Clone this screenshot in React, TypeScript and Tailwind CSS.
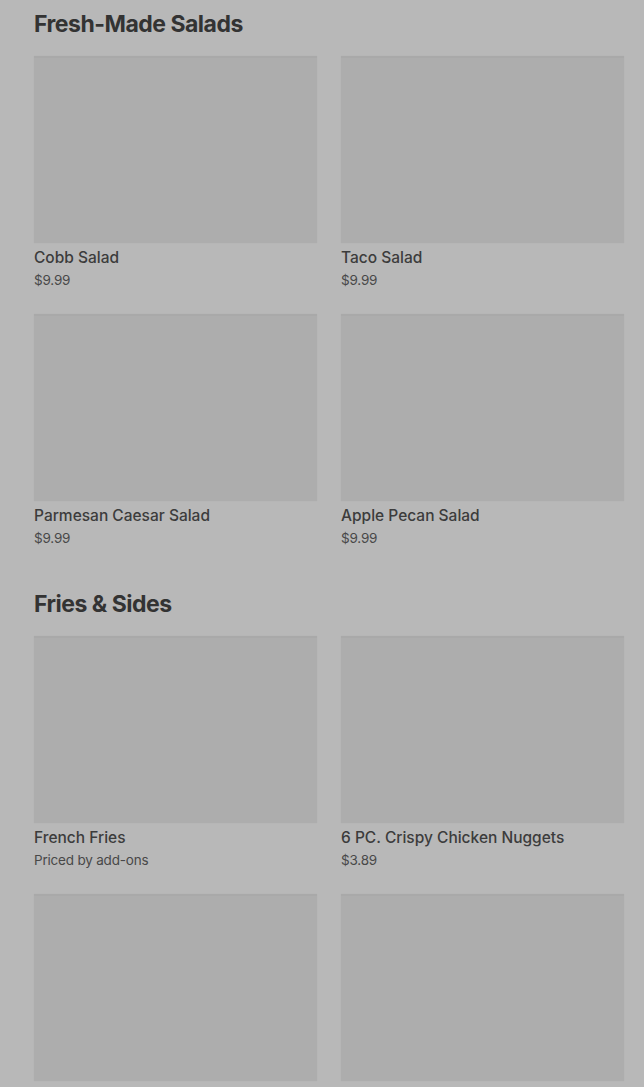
import React from "react";

type Item = { name: string; price: string };

const sections: { title: string; items: Item[] }[] = [
  {
    title: "Fresh-Made Salads",
    items: [
      { name: "Cobb Salad", price: "$9.99" },
      { name: "Taco Salad", price: "$9.99" },
      { name: "Parmesan Caesar Salad", price: "$9.99" },
      { name: "Apple Pecan Salad", price: "$9.99" },
    ],
  },
  {
    title: "Fries & Sides",
    items: [
      { name: "French Fries", price: "Priced by add-ons" },
      { name: "6 PC. Crispy Chicken Nuggets", price: "$3.89" },
      { name: "Sour Cream & Chive Potato", price: "$2.99" },
      { name: "10 PC. Crispy Chicken Nuggets", price: "$5.49" },
    ],
  },
];

function Card({ item }: { item: Item }) {
  return (
    <div className="flex flex-col">
      <div className="h-[187px] bg-[#adadad] border-t-2 border-[#a9a9a9] shadow-[0_0_1px_rgba(0,0,0,0.06)]" />
      <div className="mt-[5px] text-[15.5px] leading-[20px] font-medium text-[#3c3c3c]">
        {item.name}
      </div>
      <div className="mt-[3px] text-[13.5px] leading-[18px] text-[#484848] tracking-[-0.2px]">
        {item.price}
      </div>
    </div>
  );
}

export default function App() {
  return (
    <div
      className="min-h-screen bg-[#b8b8b8] pl-[34px] pr-[20px] pt-[10px]"
      style={{ fontFamily: "Inter, 'Noto Sans', 'Liberation Sans', sans-serif" }}
    >
      {sections.map((s, i) => (
        <section key={s.title} className={i > 0 ? "mt-[43px]" : ""}>
          <h2 className="text-[23px] leading-[28px] font-bold text-[#333333] tracking-[-0.5px] mb-[18px]">
            {s.title}
          </h2>
          <div className="grid grid-cols-2 gap-x-[24px] gap-y-[25px]">
            {s.items.map((it) => (
              <Card key={it.name} item={it} />
            ))}
          </div>
        </section>
      ))}
    </div>
  );
}
